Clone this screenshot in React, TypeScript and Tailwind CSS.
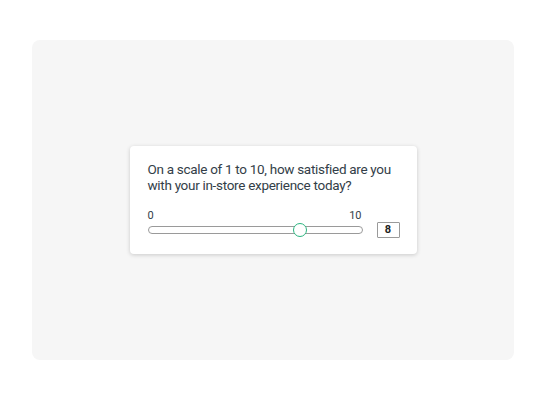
import React from "react";

export default function App() {
  return (
    <div className="w-[546px] h-[400px] bg-white flex items-center justify-center" style={{ fontFamily: "Roboto, 'Noto Sans', sans-serif" }}>
      <div className="w-[482px] h-[320px] bg-[#f6f6f6] rounded-[8px] flex items-center justify-center">
        <div className="w-[287px] h-[108px] bg-white rounded-[4px] shadow-[0_1px_4px_rgba(0,0,0,0.18)] pl-[18px] pr-[10px] pt-[15px]">
          <p className="text-[13.5px] leading-[16px] tracking-[-0.3px] text-[#333e48] whitespace-nowrap">
            On a scale of 1 to 10, how satisfied are you
            <br />
            with your in-store experience today?
          </p>
          <div className="mt-[16px] w-[214px] flex justify-between text-[11px] leading-[13px] text-[#333e48]">
            <span>0</span>
            <span>10</span>
          </div>
          <div className="flex items-center">
            <div className="relative w-[215px] h-[8px] rounded-full border border-[#9a9a9a] bg-white">
              <div className="absolute left-[144px] top-1/2 -translate-y-1/2 w-[14px] h-[14px] rounded-full border-[1.5px] border-[#2bb57f] bg-white" />
            </div>
            <div className="ml-[14px] w-[23px] h-[16px] border border-[#9a9a9a] rounded-[1px] flex items-center justify-center text-[11px] font-bold text-[#222]">
              8
            </div>
          </div>
        </div>
      </div>
    </div>
  );
}
